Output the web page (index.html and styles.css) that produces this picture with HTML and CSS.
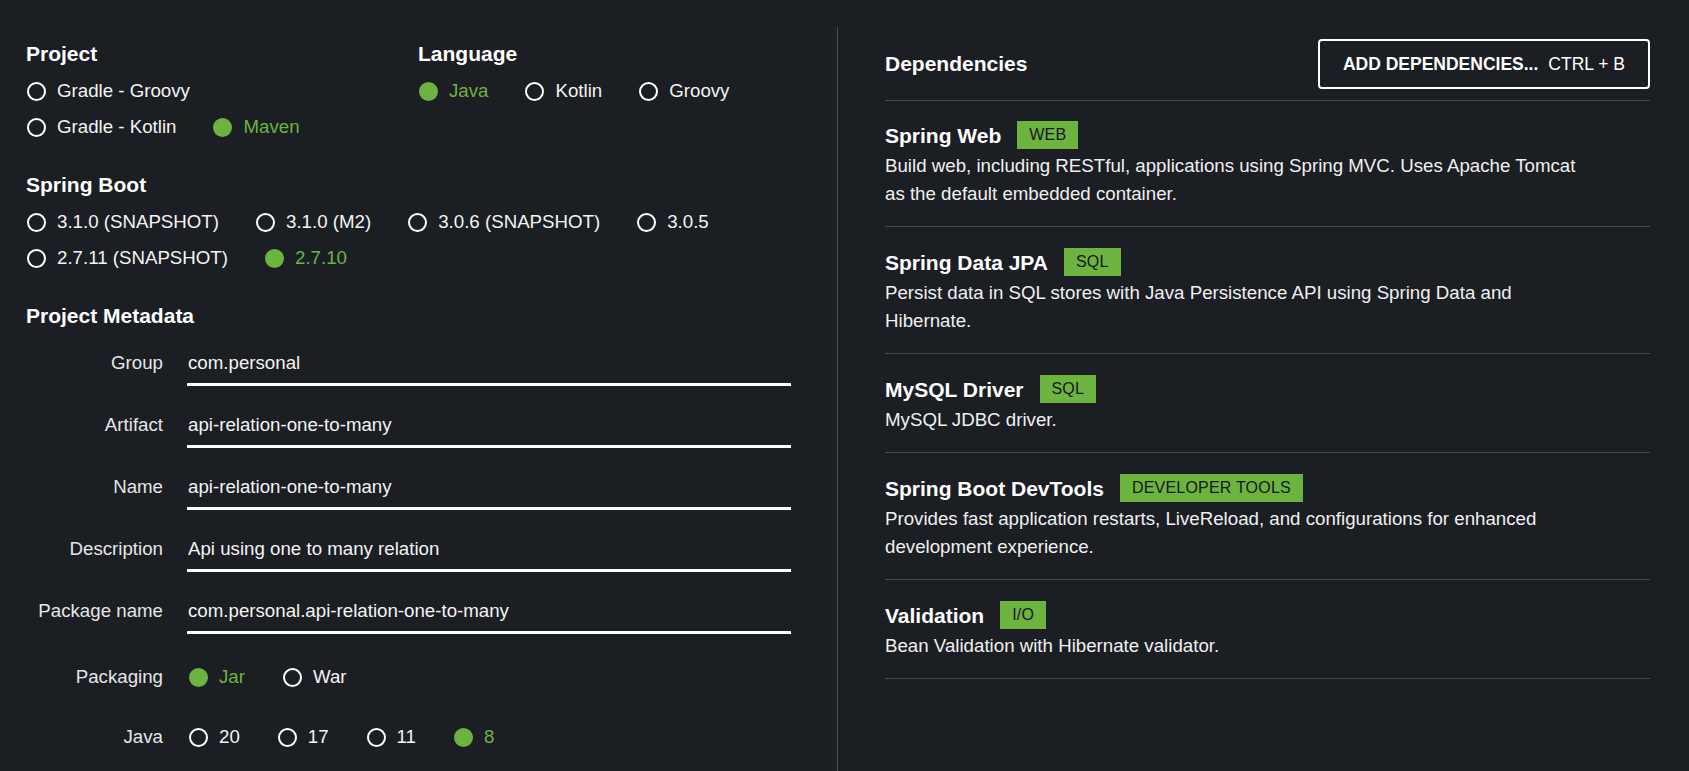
FILE: index.html
```html
<!DOCTYPE html>
<html lang="en">
<head>
<meta charset="utf-8">
<title>Spring Initializr</title>
<link rel="stylesheet" href="styles.css">
</head>
<body>
<div class="page">
  <div class="col-left">
    <div class="top-grid">
      <div class="section">
        <div class="heading">Project</div>
        <div class="radio-line">
          <label class="radio"><span class="dot"></span><span class="rlabel">Gradle - Groovy</span></label>
        </div>
        <div class="radio-line">
          <label class="radio"><span class="dot"></span><span class="rlabel">Gradle - Kotlin</span></label>
          <label class="radio checked"><span class="dot"></span><span class="rlabel">Maven</span></label>
        </div>
      </div>
      <div class="section">
        <div class="heading">Language</div>
        <div class="radio-line">
          <label class="radio checked"><span class="dot"></span><span class="rlabel">Java</span></label>
          <label class="radio"><span class="dot"></span><span class="rlabel">Kotlin</span></label>
          <label class="radio"><span class="dot"></span><span class="rlabel">Groovy</span></label>
        </div>
      </div>
    </div>

    <div class="section spaced">
      <div class="heading">Spring Boot</div>
      <div class="radio-line">
        <label class="radio"><span class="dot"></span><span class="rlabel">3.1.0 (SNAPSHOT)</span></label>
        <label class="radio"><span class="dot"></span><span class="rlabel">3.1.0 (M2)</span></label>
        <label class="radio"><span class="dot"></span><span class="rlabel">3.0.6 (SNAPSHOT)</span></label>
        <label class="radio"><span class="dot"></span><span class="rlabel">3.0.5</span></label>
      </div>
      <div class="radio-line">
        <label class="radio"><span class="dot"></span><span class="rlabel">2.7.11 (SNAPSHOT)</span></label>
        <label class="radio checked"><span class="dot"></span><span class="rlabel">2.7.10</span></label>
      </div>
    </div>

    <div class="section spaced">
      <div class="heading">Project Metadata</div>
      <div class="meta">
        <div class="field-row">
          <span class="mlabel">Group</span>
          <input class="minput" type="text" value="com.personal">
        </div>
        <div class="field-row">
          <span class="mlabel">Artifact</span>
          <input class="minput" type="text" value="api-relation-one-to-many">
        </div>
        <div class="field-row">
          <span class="mlabel">Name</span>
          <input class="minput" type="text" value="api-relation-one-to-many">
        </div>
        <div class="field-row">
          <span class="mlabel">Description</span>
          <input class="minput" type="text" value="Api using one to many relation">
        </div>
        <div class="field-row">
          <span class="mlabel">Package name</span>
          <input class="minput" type="text" value="com.personal.api-relation-one-to-many">
        </div>
        <div class="radio-row">
          <span class="mlabel">Packaging</span>
          <div class="radio-line">
            <label class="radio checked"><span class="dot"></span><span class="rlabel">Jar</span></label>
            <label class="radio"><span class="dot"></span><span class="rlabel">War</span></label>
          </div>
        </div>
        <div class="radio-row">
          <span class="mlabel">Java</span>
          <div class="radio-line">
            <label class="radio"><span class="dot"></span><span class="rlabel">20</span></label>
            <label class="radio"><span class="dot"></span><span class="rlabel">17</span></label>
            <label class="radio"><span class="dot"></span><span class="rlabel">11</span></label>
            <label class="radio checked"><span class="dot"></span><span class="rlabel">8</span></label>
          </div>
        </div>
      </div>
    </div>
  </div>

  <div class="col-right">
    <div class="dep-header">
      <div class="heading">Dependencies</div>
      <button class="add-btn" type="button"><strong>ADD DEPENDENCIES...</strong><span>CTRL + B</span></button>
    </div>
    <ul class="dep-list">
      <li class="dep">
        <div class="dep-title"><span class="dep-name">Spring Web</span><span class="badge">WEB</span></div>
        <p class="dep-desc">Build web, including RESTful, applications using Spring MVC. Uses Apache Tomcat as the default embedded container.</p>
      </li>
      <li class="dep">
        <div class="dep-title"><span class="dep-name">Spring Data JPA</span><span class="badge">SQL</span></div>
        <p class="dep-desc">Persist data in SQL stores with Java Persistence API using Spring Data and Hibernate.</p>
      </li>
      <li class="dep">
        <div class="dep-title"><span class="dep-name">MySQL Driver</span><span class="badge">SQL</span></div>
        <p class="dep-desc">MySQL JDBC driver.</p>
      </li>
      <li class="dep">
        <div class="dep-title"><span class="dep-name">Spring Boot DevTools</span><span class="badge">DEVELOPER TOOLS</span></div>
        <p class="dep-desc">Provides fast application restarts, LiveReload, and configurations for enhanced development experience.</p>
      </li>
      <li class="dep">
        <div class="dep-title"><span class="dep-name">Validation</span><span class="badge">I/O</span></div>
        <p class="dep-desc">Bean Validation with Hibernate validator.</p>
      </li>
    </ul>
  </div>
</div>
</body>
</html>
```

FILE: styles.css
```css
* {
  box-sizing: border-box;
}

html, body {
  margin: 0;
  padding: 0;
  background: #1b1e23;
  height: 100%;
  overflow: hidden;
}

body {
  font-family: "Liberation Sans", Arial, sans-serif;
  color: #f4f4f4;
  font-size: 18.7px;
}

.page {
  display: flex;
  min-height: 100vh;
  padding-top: 27px;
}

.col-left {
  width: 838px;
  flex: none;
  padding: 15px 0 0 26px;
  border-right: 1px solid #4a4d52;
}

.col-right {
  flex: 1;
  padding: 12px 39px 0 47px;
}

.heading {
  font-size: 21px;
  font-weight: 700;
  line-height: 24px;
  color: #ffffff;
}

.top-grid {
  display: grid;
  grid-template-columns: 392px auto;
}

.section .heading {
  margin-bottom: 7px;
}

.section.spaced {
  margin-top: 28px;
}

.radio-line {
  display: flex;
  align-items: center;
  height: 36px;
  gap: 36px;
}

.radio {
  display: flex;
  align-items: center;
  cursor: pointer;
}

.dot {
  width: 19px;
  height: 19px;
  margin-left: 1px;
  border: 2px solid #ffffff;
  border-radius: 50%;
  flex: none;
}

.rlabel {
  margin-left: 11px;
  color: #f4f4f4;
  white-space: nowrap;
}

.radio.checked .dot {
  background: #6db33f;
  border-color: #6db33f;
}

.radio.checked .rlabel {
  color: #6db33f;
}

.meta {
  display: flex;
  flex-direction: column;
  margin-top: 23px;
}

.field-row,
.radio-row {
  display: grid;
  grid-template-columns: 137px 604px;
  column-gap: 24px;
}

.field-row {
  align-items: start;
}

.radio-row {
  align-items: center;
}

.field-row + .field-row {
  margin-top: 27px;
}

.field-row + .radio-row {
  margin-top: 25px;
}

.radio-row + .radio-row {
  margin-top: 24px;
}

.mlabel {
  text-align: right;
  line-height: 24px;
  color: #e6e6e6;
  white-space: nowrap;
}

.radio-row .radio-line .dot {
  margin-left: 2px;
}

.minput {
  display: block;
  width: 100%;
  height: 35px;
  margin: 0;
  padding: 0 0 8px 1px;
  border: 0;
  border-bottom: 3px solid #ffffff;
  background: transparent;
  color: #f4f4f4;
  font-family: inherit;
  font-size: 18.7px;
  line-height: 24px;
  outline: none;
}

.dep-header {
  display: flex;
  align-items: center;
  justify-content: space-between;
  height: 50px;
  margin-bottom: 11px;
}

.add-btn {
  display: flex;
  align-items: center;
  gap: 10px;
  height: 50px;
  padding: 0 23px;
  border: 2px solid #ffffff;
  border-radius: 4px;
  background: transparent;
  color: #ffffff;
  font-family: inherit;
  font-size: 17.5px;
  cursor: pointer;
}

.add-btn strong {
  font-weight: 700;
}

.dep-list {
  list-style: none;
  margin: 0;
  padding: 0;
  border-top: 1px solid #45484d;
}

.dep {
  padding: 21px 0 18px;
  border-bottom: 1px solid #45484d;
}

.dep + .dep {
  padding-top: 22px;
}

.dep-title {
  display: flex;
  align-items: center;
  gap: 16px;
  height: 28px;
}

.dep-name {
  font-size: 21px;
  font-weight: 700;
  color: #ffffff;
  line-height: 24px;
}

.badge {
  display: inline-block;
  height: 28px;
  line-height: 28px;
  padding: 0 12px;
  margin-top: -3px;
  background: #6db33f;
  color: #15181c;
  font-size: 16px;
  letter-spacing: 0.2px;
}

.dep-desc {
  margin: 2px 0 0;
  max-width: 699px;
  line-height: 28px;
  color: #f0f0f0;
}
```
